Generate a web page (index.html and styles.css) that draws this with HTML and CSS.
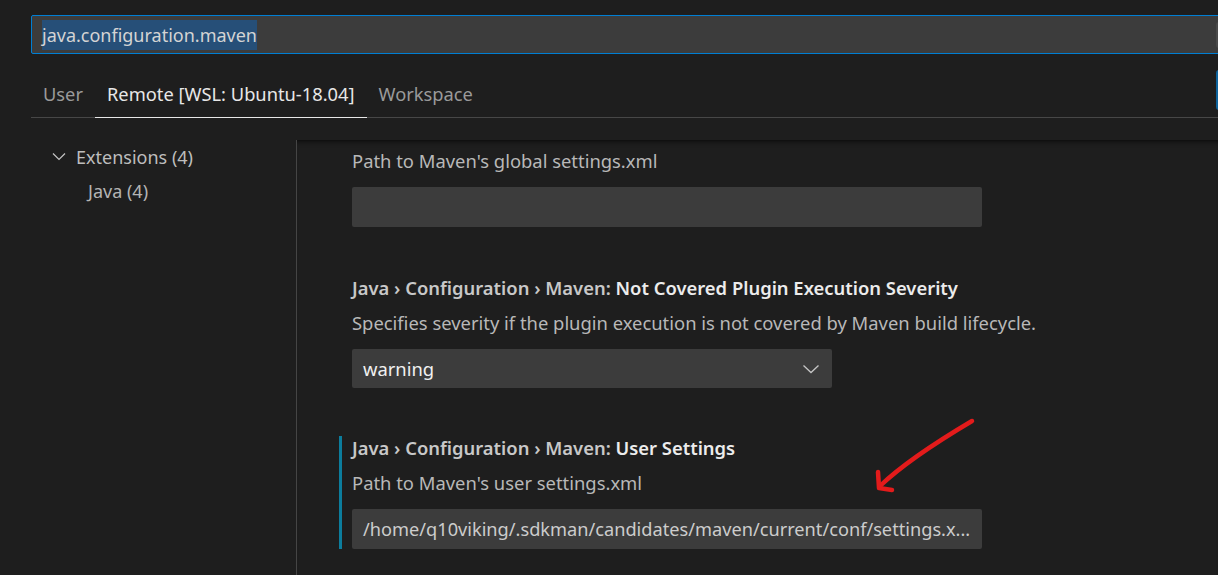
FILE: index.html
```html
<!DOCTYPE html>
<html>
<head>
<meta charset="utf-8">
<link rel="stylesheet" href="styles.css">
</head>
<body>
<div class="page">
  <div class="search">
    <span class="search-text"><span class="sel">java.configuration.maven</span></span>
    <span class="search-badge"></span>
  </div>
  <div class="tabs-row">
    <div class="tabs">
      <div class="tab">User</div>
      <div class="tab active">Remote [WSL: Ubuntu-18.04]</div>
      <div class="tab">Workspace</div>
    </div>
    <div class="sync-btn"></div>
  </div>
  <div class="body">
    <div class="toc">
      <div class="toc-row">
        <svg class="chev" width="14" height="14" viewBox="0 0 14 14"><path d="M1 4.5 L7 10.5 L13 4.5" fill="none" stroke="#c5c5c5" stroke-width="1.2"/></svg>
        <span>Extensions (4)</span>
      </div>
      <div class="toc-row sub">Java (4)</div>
    </div>
    <div class="content">
      <div class="item first">
        <div class="desc">Path to Maven's global settings.xml</div>
        <div class="input"></div>
      </div>
      <div class="item">
        <div class="title"><span class="cat">Java › Configuration › Maven: </span><span class="label">Not Covered Plugin Execution Severity</span></div>
        <div class="desc">Specifies severity if the plugin execution is not covered by Maven build lifecycle.</div>
        <div class="select">
          <span>warning</span>
          <svg width="16" height="16" viewBox="0 0 16 16"><path d="M0.5 4.5 L8 11.5 L15.5 4.5" fill="none" stroke="#c5c5c5" stroke-width="1.3"/></svg>
        </div>
      </div>
      <div class="item modified">
        <div class="title"><span class="cat">Java › Configuration › Maven: </span><span class="label">User Settings</span></div>
        <div class="desc">Path to Maven's user settings.xml</div>
        <div class="input value">/home/q10viking/.sdkman/candidates/maven/current/conf/settings.x...</div>
      </div>
    </div>
  </div>
  <svg class="arrow" width="1218" height="575" viewBox="0 0 1218 575">
    <path d="M972 421 C 945 437, 905 462, 880 486" fill="none" stroke="#e31b1b" stroke-width="4.5" stroke-linecap="round"/>
    <path d="M878 472 L879 488 L892 490" fill="none" stroke="#e31b1b" stroke-width="4.5" stroke-linecap="round" stroke-linejoin="round"/>
  </svg>
</div>
</body>
</html>
```

FILE: styles.css
```css
* { box-sizing: border-box; }
html, body {
  margin: 0;
  padding: 0;
  background: #1e1e1e;
  overflow: hidden;
}
body {
  font-family: "Noto Sans", "Open Sans", sans-serif;
  color: #cccccc;
  width: 1218px;
  height: 575px;
}
.page {
  position: relative;
  width: 1218px;
  height: 575px;
  overflow: hidden;
}
.search {
  margin: 15px 0 0 31px;
  width: 1240px;
  height: 39px;
  background: #3c3c3c;
  border: 1px solid #007fd4;
  border-radius: 2px;
  display: flex;
  align-items: center;
  padding-left: 10px;
  font-size: 18px;
}
.search-text {
  flex: 1;
}
.sel {
  background: #264f78;
  color: #d4d4d4;
  display: inline-block;
  line-height: 30px;
}
.search-badge {
  width: 40px;
  height: 26px;
  background: #4a4a4a;
  border-radius: 3px;
  margin-right: 14px;
}
.tabs-row {
  margin: 16px 0 0 31px;
  height: 48px;
  display: flex;
  border-bottom: 1px solid #474747;
  width: 1240px;
}
.tabs {
  display: flex;
  flex: 1;
}
.tab {
  padding: 0 12px 1px;
  height: 48px;
  display: flex;
  align-items: center;
  font-size: 18.3px;
  color: #9a9a9a;
  border-bottom: 1px solid transparent;
  margin-bottom: -1px;
}
.tab.active {
  color: #e7e7e7;
  border-bottom-color: #e7e7e7;
}
.sync-btn {
  width: 40px;
  height: 40px;
  background: #0e639c;
  border-radius: 3px;
  margin-right: 15px;
}
.body {
  margin-top: 22px;
  display: flex;
  height: 435px;
}
.toc {
  width: 296px;
  flex: none;
  padding-left: 52px;
  font-size: 18px;
}
.toc-row {
  height: 34px;
  display: flex;
  align-items: center;
  color: #bdbdbd;
}
.toc-row .chev {
  margin-right: 10px;
  margin-top: -3px;
}
.toc-row.sub {
  padding-left: 36px;
  color: #b4b4b4;
}
.content {
  flex: 1;
  border-left: 1px solid #454545;
  box-shadow: inset 0 6px 6px -6px #000;
  padding-left: 42px;
  font-size: 18.4px;
}
.item {
  border-left: 3px solid transparent;
  padding-left: 10px;
  margin-bottom: 49px;
}
.item.first {
  padding-top: 9px;
}
.item.modified {
  border-left-color: #0c7d9d;
  margin-top: -1px;
}
.title {
  line-height: 24px;
  height: 24px;
  font-weight: 600;
  white-space: nowrap;
}
.cat {
  color: #c8c8c8;
}
.label {
  color: #ececec;
}
.desc {
  line-height: 24px;
  margin-top: 11px;
  color: #b8b8b8;
  white-space: nowrap;
}
.item.first .desc {
  margin-top: 0;
}
.input {
  margin-top: 14px;
  width: 630px;
  height: 40px;
  background: #3c3c3c;
  border-radius: 2px;
  padding-left: 11px;
  display: flex;
  align-items: center;
  color: #cccccc;
  white-space: nowrap;
  overflow: hidden;
}
.input.value {
  font-size: 18.2px;
}
.select {
  margin-top: 14px;
  width: 480px;
  height: 39px;
  background: #3c3c3c;
  border-radius: 2px;
  padding: 0 13px 0 11px;
  display: flex;
  align-items: center;
  justify-content: space-between;
  color: #f0f0f0;
}
.arrow {
  position: absolute;
  left: 0;
  top: 0;
  pointer-events: none;
}
```
